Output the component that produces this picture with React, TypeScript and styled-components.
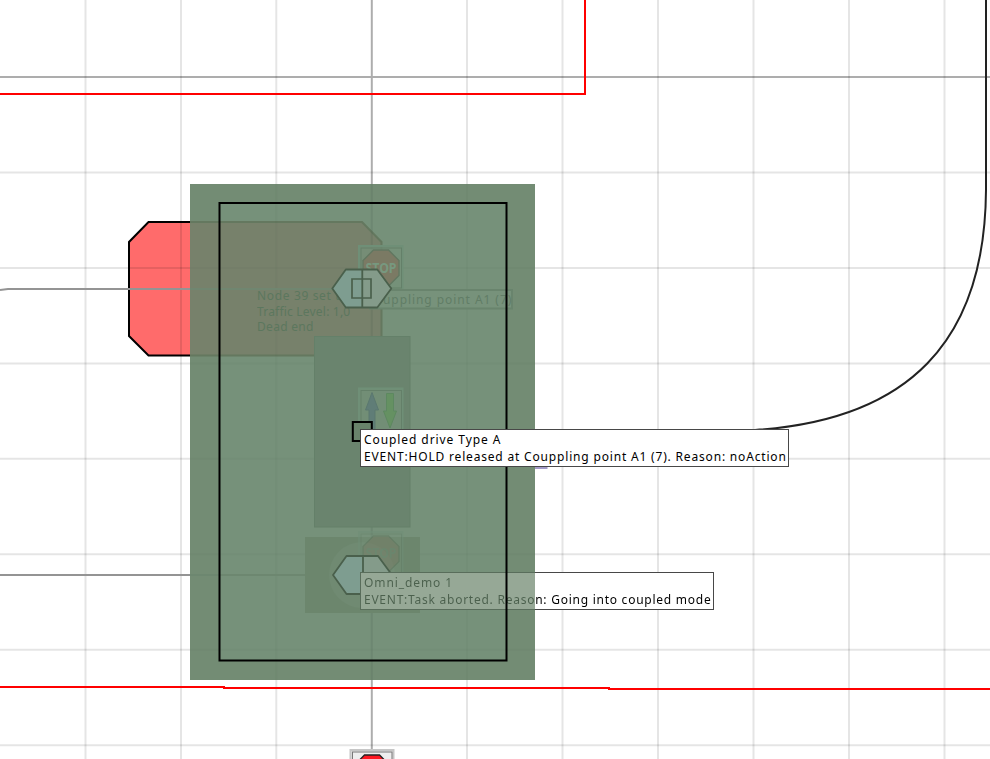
import React from "react";
import styled, { createGlobalStyle } from "styled-components";

const GlobalStyle = createGlobalStyle`
  html, body { margin: 0; padding: 0; background: #fff; }
  body { overflow: hidden; }
`;

const Viewport = styled.main`
  position: relative;
  width: 990px;
  height: 759px;
  overflow: hidden;
  background: #fff;
  font-family: "Noto Sans", "Noto Sans CJK SC", sans-serif;
`;

const Canvas = styled.svg`
  display: block;
`;

const Overlay = styled.svg`
  position: absolute;
  inset: 0;
`;

const MapLabel = styled.div<{ $x: number; $y: number; $w: number; $faded?: boolean }>`
  position: absolute;
  left: ${(p) => p.$x}px;
  top: ${(p) => p.$y}px;
  width: ${(p) => p.$w}px;
  height: 38px;
  box-sizing: border-box;
  padding: 1px 0 0 3px;
  border: 1px solid ${(p) => (p.$faded ? "transparent" : "#484848")};
  background: ${(p) =>
    p.$faded
      ? `linear-gradient(90deg, #96a896 174px, #fff 174px) padding-box,
         linear-gradient(90deg, #596d5b 175px, #484848 175px) border-box`
      : "#fff"};
  color: #000;
`;

const LabelLine = styled.div<{ $spacing: number; $fade?: number }>`
  font-size: 12px;
  line-height: 17px;
  letter-spacing: ${(p) => p.$spacing}px;
  white-space: pre;
  width: max-content;
  ${(p) =>
    p.$fade
      ? `color: transparent; background: linear-gradient(90deg, #4b604d ${p.$fade}px, #000 ${p.$fade}px); background-clip: text; -webkit-background-clip: text;`
      : ""}
`;

const NodeInfo = styled.div`
  position: absolute;
  left: 257px;
  top: 288px;
  color: #5c775e;
  clip-path: polygon(0 0, 75px 0, 90px 20px, 100% 20px, 100% 100%, 0 100%);
`;

const InfoLine = styled.div<{ $spacing: number }>`
  font-size: 12px;
  line-height: 15.5px;
  letter-spacing: ${(p) => p.$spacing}px;
  white-space: pre;
`;

const PointLabel = styled.div`
  position: absolute;
  left: 383px;
  top: 291px;
  color: #617d66;
  font-size: 12px;
  line-height: 17px;
  letter-spacing: 0.93px;
  white-space: pre;
`;

const verticals = [85.5, 181, 276.3, 467, 562.5, 658, 753.5, 849, 944.5];
const horizontals = [172.5, 268, 363.4, 458.8, 554.2, 649.7, 745.2];

const Grid = ({ color, axis }: { color: string; axis: string }) => (
  <g strokeWidth={2}>
    {verticals.map((x) => (
      <path key={x} d={`M${x} 0V759`} stroke={color} />
    ))}
    {horizontals.map((y) => (
      <path key={y} d={`M0 ${y}H990`} stroke={color} />
    ))}
    <path d="M371.8 0V759M0 77H990" stroke={axis} />
  </g>
);

const Octagon = ({ x, y, fill, stroke }: { x: number; y: number; fill: string; stroke: string }) => (
  <path
    transform={`translate(${x} ${y})`}
    d="M-7.5-18H7.5L18-7.5V7.5L7.5 18H-7.5L-18 7.5V-7.5Z"
    fill={fill}
    stroke={stroke}
    strokeWidth={1.3}
  />
);

const StopText = ({ y, fill }: { y: number; fill: string }) => (
  <text
    x={365.5}
    y={y}
    fontFamily="Noto Sans"
    fontSize={13.5}
    fontWeight={700}
    textLength={31}
    lengthAdjust="spacingAndGlyphs"
    fill={fill}
  >
    STOP
  </text>
);

const Hexagon = ({ x, y }: { x: number; y: number }) => (
  <g transform={`translate(${x} ${y})`}>
    <path d="M0-19H-16L-29.5 0L-16 19H0Z" fill="#7e9d90" />
    <path d="M0-19H15.5L29.5 0L15.5 19H0Z" fill="#849b8a" />
    <path
      d="M-16-19H15.5L29.5 0L15.5 19H-16L-29.5 0ZM.5-19V19"
      fill="none"
      stroke="#4a604c"
      strokeWidth={1.8}
      strokeLinejoin="round"
    />
  </g>
);

const SignFrame = ({ x, y }: { x: number; y: number }) => (
  <g fill="none">
    <rect x={x} y={y} width={43.5} height={44} fill="#76917a" fillOpacity={0.75} stroke="#6f8f77" strokeWidth={2} />
    <rect x={x + 2} y={y + 2} width={40.5} height={40} stroke="#648069" strokeWidth={1} />
  </g>
);

const Layout = () => (
  <Canvas width={990} height={759} viewBox="0 0 990 759">
    <defs>
      <clipPath id="vehicle">
        <rect x={190} y={184} width={345} height={496} />
      </clipPath>
    </defs>

    <path
      d="M148.5 222H362L381.5 242V336L362 355.5H148.5L129 336V242Z"
      fill="#ff6b6b"
      stroke="#000"
      strokeWidth={2}
    />
    <Grid color="rgba(0,0,0,.1)" axis="rgba(0,0,0,.32)" />
    <path d="M0 290L8 289H190M0 575H190" fill="none" stroke="#949494" strokeWidth={2} />
    <path d="M986 0V190C985 342 908 420 755 430" fill="none" stroke="#222" strokeWidth={2} />
    <path d="M0 94H585V0" fill="none" stroke="#f00" strokeWidth={2} />
    <path d="M0 687H224V688H609V689H990" fill="none" stroke="#f00" strokeWidth={2} />
    <path d="M535 468H546.5V465" fill="none" stroke="#a39bc8" strokeWidth={2} />

    <rect x={190} y={184} width={345} height={496} fill="#738c74" />
    <rect x={220} y={203} width={287} height={457} fill="#76917a" />
    <g clipPath="url(#vehicle)">
      <path d="M148.5 222H362L381.5 242V336L362 355.5H148.5Z" fill="#77816b" />
      <path d="M148.5 222H362L381.5 242V336M190 355.5H314" fill="none" stroke="#64785f" strokeWidth={2} />
      <Grid color="rgba(70,95,75,.055)" axis="rgba(70,95,75,.18)" />
      <path d="M190 289H335" stroke="#708670" strokeWidth={2} />
      <path d="M190 575H332" stroke="#6d8770" strokeWidth={2} />
      <rect x={305} y={537} width={115} height={76} fill="#6c866d" />
      <circle cx={362} cy={575} r={33} fill="#708a72" />
      <SignFrame x={359} y={246} />
      <Octagon x={381} y={268} fill="#7b7a64" stroke="#617760" />
      <StopText y={272.5} fill="#77987f" />
      <rect x={370} y={290} width={142} height={18.5} fill="#77927b" stroke="#69846d" strokeWidth={2} />
      <rect x={314.5} y={336.5} width={95.5} height={190.5} fill="#6a846e" stroke="#648069" />
      <SignFrame x={359} y={388.5} />
      <path d="M372 392.5L378.5 410H375V430H369V410H365.5Z" fill="#607d77" stroke="#5b786f" />
      <path d="M386.5 393.5H393.5V411H396.5L390 428L383.5 411H386.5Z" fill="#659162" stroke="#5d8860" />
      <g opacity={0.5}>
        <SignFrame x={359} y={532} />
        <Octagon x={381} y={554} fill="#777e67" stroke="#5d745c" />
        <StopText y={558} fill="#6a866e" />
      </g>
    </g>
    <rect x={352.8} y={422} width={19} height={19} fill="#69836b" stroke="#000" strokeWidth={2} />

    <g>
      <rect x={350.5} y={750} width={43} height={44} fill="#e9e9e9" stroke="#c6c6c6" strokeWidth={2} />
      <rect x={352.5} y={752} width={39.5} height={40} fill="#eee" stroke="#777" />
      <Octagon x={372} y={773} fill="#ff1721" stroke="#222" />
    </g>
  </Canvas>
);

export default function App() {
  return (
    <>
      <GlobalStyle />
      <Viewport>
        <Layout />
        <NodeInfo>
          <InfoLine $spacing={0.65}>Node 39 set to</InfoLine>
          <InfoLine $spacing={0.2}>Traffic Level: 1,0</InfoLine>
          <InfoLine $spacing={0.3}>Dead end</InfoLine>
        </NodeInfo>
        <PointLabel>uppling point A1 (7)</PointLabel>
        <Overlay width={990} height={759}>
          <Hexagon x={361.8} y={288.5} />
          <path d="M352 279H371V298H352Z" fill="none" stroke="#4a604c" strokeWidth={1.7} />
          <Hexagon x={362.5} y={575} />
        </Overlay>
        <MapLabel $x={360} $y={572} $w={354} $faded>
          <LabelLine $spacing={0.9} $fade={171}>Omni_demo 1</LabelLine>
          <LabelLine $spacing={0.75} $fade={171}>EVENT:Task aborted. Reason: Going into coupled mode</LabelLine>
        </MapLabel>
        <Overlay width={990} height={759}>
          <rect x={219.5} y={203} width={287} height={457.5} fill="none" stroke="#000" strokeWidth={2} />
        </Overlay>
        <MapLabel $x={360} $y={429} $w={429}>
          <LabelLine $spacing={0.92}>Coupled drive Type A</LabelLine>
          <LabelLine $spacing={0.82}>EVENT:HOLD released at Couppling point A1 (7). Reason: noAction</LabelLine>
        </MapLabel>
      </Viewport>
    </>
  );
}
